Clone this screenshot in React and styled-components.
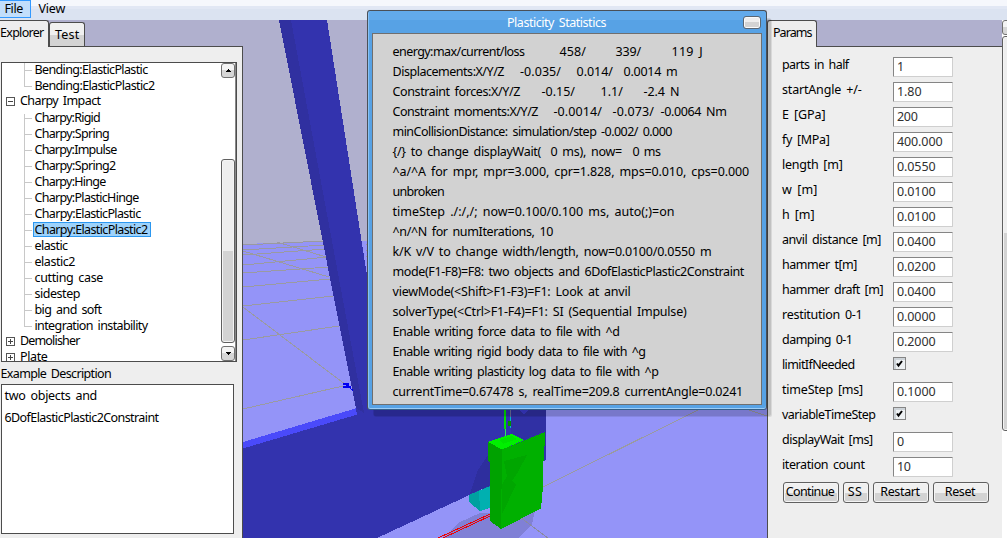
import React, { useLayoutEffect, useRef } from "react";
import styled, { createGlobalStyle, css } from "styled-components";

const GlobalStyle = createGlobalStyle`
  * { box-sizing: border-box; }
  html, body { margin: 0; height: 100%; overflow: hidden; }
  body {
    font-family: "Noto Sans", "Liberation Sans", sans-serif;
    font-size: 12.5px;
    line-height: 16px;
    color: #000;
  }
`;

const Text = styled.span`
  display: inline-block;
  flex: none;
  white-space: pre;
  word-spacing: 2px;
  margin-left: ${(p) => p.$gap || 0}px;
`;

/* Tracks its letters so that the text fills the given width. */
function Fitted({ w, gap, children }) {
  const ref = useRef(null);
  useLayoutEffect(() => {
    const el = ref.current;
    el.style.letterSpacing = "0px";
    const natural = el.getBoundingClientRect().width;
    el.style.letterSpacing = `${(w + 0.5 - natural) / children.length}px`;
  }, [w, children]);
  return (
    <Text ref={ref} $gap={gap}>
      {children}
    </Text>
  );
}

const Frame = styled.div`
  position: relative;
  display: flex;
  flex-direction: column;
  width: 1007px;
  height: 538px;
  overflow: hidden;
  background: #b0b0ce;
`;

const MenuBar = styled.div`
  display: flex;
  flex: none;
  height: 20px;
  background: linear-gradient(#f5f7fc 0 6px, #e1e7f4 6px 9px, #dbe3f1 9px);
`;

const MenuItem = styled.div`
  height: 18px;
  width: ${(p) => (p.$active ? 31 : 44)}px;
  padding-left: ${(p) => (p.$active ? 4.5 : 7.5)}px;
  border: 1px solid ${(p) => (p.$active ? "#3399ff" : "transparent")};
  border-width: 1px 1px 1px 0;
  background: ${(p) => (p.$active ? "#c2defb" : "none")};
`;

const Main = styled.div`
  display: flex;
  flex: 1;
  min-height: 0;
`;

const Dock = styled.div`
  display: flex;
  flex-direction: column;
  flex: none;
  width: ${(p) => p.$w}px;
`;

const TabStrip = styled.div`
  display: flex;
  align-items: flex-end;
  height: 27px;
  flex: none;
  border-bottom: 1px solid #4c4c4c;
`;

const Tab = styled.div`
  width: ${(p) => p.$w}px;
  height: ${(p) => (p.$active ? 27 : 24)}px;
  padding: 4px 0 0 ${(p) => p.$pad}px;
  margin-bottom: ${(p) => (p.$active ? -1 : 0)}px;
  border: 1px solid #4c4c4c;
  border-bottom: 0;
  border-left-width: ${(p) => (p.$flush ? 0 : 1)}px;
  border-radius: ${(p) => (p.$flush ? "0 3px 0 0" : "3px 3px 0 0")};
  background: ${(p) =>
    p.$active ? "#eeeeee" : "linear-gradient(#f0f0f0 0 12px, #d3d3d3 12px)"};
`;

const PanelBody = styled.div`
  display: flex;
  flex-direction: column;
  flex: 1;
  min-height: 0;
  background: #eeeeee;
  ${(p) =>
    p.$explorer
      ? css`padding: 15px 0 0 1px; border-right: 1px solid #4c4c4c;`
      : css`padding: 5px 0 0 14px; border-left: 1px solid #4c4c4c;`}
`;

const TreeBox = styled.div`
  display: flex;
  justify-content: space-between;
  width: 236px;
  height: 300px;
  border: 1px solid #4c4c4c;
  background: #fff;
  overflow: hidden;
`;

const Tree = styled.div`
  margin-top: -2px;
`;

const Leaf = styled.div`
  display: flex;
  align-items: center;
  height: 16px;
  padding-left: 22px;
  background:
    linear-gradient(#c8c8c8, #c8c8c8) 22px ${(p) => (p.$first ? "5px" : "0")} / 1px
      ${(p) => (p.$last ? "9px" : "16px")} no-repeat,
    linear-gradient(#c8c8c8, #c8c8c8) 22px 9px / 8px 1px no-repeat;
`;

const LeafLabel = styled.div`
  margin-left: 9px;
  height: 15px;
  line-height: 13px;
  padding: 0 2px 0 0.5px;
  border: 1px solid ${(p) => (p.$selected ? "#2b97f0" : "transparent")};
  background: ${(p) => (p.$selected ? "#9dd2fb" : "none")};
`;

const Branch = styled.div`
  display: flex;
  align-items: center;
  height: 16px;
  padding-left: 4px;
  gap: 5px;
`;

const BranchLabel = styled.div`
  height: 16px;
  line-height: 16px;
`;

const Expander = styled.span`
  width: 9px;
  height: 9px;
  margin-top: 1px;
  border: 1px solid #555;
  background:
    linear-gradient(#444, #444) center / 5px 1px no-repeat,
    linear-gradient(#444, #444) center / 1px ${(p) => (p.$open ? 0 : 5)}px no-repeat,
    #fff;
`;

const ScrollBar = styled.div`
  display: flex;
  flex-direction: column;
  flex: none;
  width: 15px;
  background: #fff;
  border-right: 1px solid #888;
`;

const ScrollButton = styled.div`
  display: flex;
  align-items: center;
  justify-content: center;
  height: 15px;
  flex: none;
  border: 1px solid #707070;
  border-radius: 3px;
  background: linear-gradient(#f4f4f4 0 45%, #d6d6d6 45%);
`;

const ScrollThumb = styled.div`
  margin-top: ${(p) => p.$top}px;
  height: ${(p) => p.$h}px;
  flex: none;
  border: 1px solid #606060;
  border-radius: 3px;
  box-shadow: inset 0 0 0 1px #f4f4f4;
  background: linear-gradient(#eeeeee 0 50%, #d3d3d3 50%);
`;

const DownSlot = styled.div`
  margin-top: 3px;
`;

const Heading = styled.div`
  margin: 4px 0 2px -0.5px;
  height: 16px;
`;

const Description = styled.div`
  width: 233px;
  height: 150px;
  padding: 0 2.5px;
  border: 1px solid #4c4c4c;
  background: #fff;
  line-height: 22px;
`;

const Viewport = styled.div`
  flex: 1;
  min-width: 0;
  svg { display: block; }
`;

const ParamRow = styled.div`
  display: flex;
  align-items: flex-start;
  height: 25px;
`;

const ParamLabel = styled.div`
  width: 111px;
  padding-top: 5px;
`;

const Field = styled.div`
  width: 60px;
  height: 20px;
  margin-top: 5px;
  padding: 1px 0 0 3px;
  border: 1px solid;
  border-color: #858585 #cfcfcf #cfcfcf #858585;
  border-radius: 1px;
  background: #fff;
  color: #303030;
`;

const CheckBox = styled.div`
  display: flex;
  width: 13px;
  height: 13px;
  margin-top: 5px;
  border: 1px solid #858585;
  background: #eef1f3;
  box-shadow: inset 1px 1px 0 1px #cdd3d8;
`;

const ButtonRow = styled.div`
  display: flex;
  gap: 4px;
  margin: 5px 0 0 1px;
`;

const Button = styled.div`
  display: flex;
  justify-content: center;
  width: ${(p) => p.$w}px;
  height: 21px;
  padding: 1px 2px 0 0;
  border: 1px solid #606060;
  border-radius: 3px;
  box-shadow: inset 0 0 0 1px #f4f4f4;
  background: linear-gradient(#f0f0f0 0 10px, #d3d3d3 10px);
`;

const EdgeScroll = styled.div`
  flex: none;
  width: 20px;
  margin-right: -15px;
  background: #fff;
`;

const Dialog = styled.div`
  position: absolute;
  left: 367px;
  top: 10px;
  width: 400px;
  height: 400px;
  padding: 0 4px 4px;
  border: 1px solid #4a5058;
  border-bottom-color: #355f88;
  border-radius: 3px;
  background: linear-gradient(#62aaeb 0 9px, #57a2e5 9px);
  box-shadow:
    inset 1px 0 0 #86c0f4,
    inset 0 -1px 0 #9bcdf8,
    6px 8px 0 -1px rgba(0, 0, 0, 0.09),
    5px 7px 0 -1px rgba(0, 0, 0, 0.1);
`;

const TitleBar = styled.div`
  display: flex;
  align-items: center;
  height: 22px;
  padding: 1px 0 0 135px;
  color: #fff;
`;

const CloseButton = styled.div`
  width: 18px;
  height: 13px;
  margin: 0 1px 0 auto;
  border: 1px solid #5a6672;
  border-radius: 3px;
  box-shadow: inset 0 0 0 1px #fafafa;
  background: linear-gradient(#eeeeee 0 50%, #d3d3d3 50%);
`;

const DialogBody = styled.div`
  height: 372px;
  padding: 8px 0 0 19.5px;
  border: 1px solid #6f6f6f;
  background: #d2d2d2;
`;

const StatLine = styled.div`
  display: flex;
  align-items: center;
  height: 20px;
`;

const leaves = [
  ["Charpy:Rigid", 65],
  ["Charpy:Spring", 74],
  ["Charpy:Impulse", 81.5],
  ["Charpy:Spring2", 80.5],
  ["Charpy:Hinge", 70.5],
  ["Charpy:PlasticHinge", 103.5],
  ["Charpy:ElasticPlastic", 105.5],
  ["Charpy:ElasticPlastic2", 112.5],
  ["elastic", 32.5],
  ["elastic2", 40],
  ["cutting case", 68],
  ["sidestep", 45],
  ["big and soft", 66.5],
  ["integration instability", 112.5],
];

/* Each line is a list of [text, start, end]. */
const stats = [
  [["energy:max/current/loss", 393, 524.5], ["458/", 560, 586], ["339/", 616, 641], ["119 J", 672, 703]],
  [["Displacements:X/Y/Z", 393, 504], ["-0.035/", 520.5, 561], ["0.014/", 577, 613], ["0.0014 m", 624, 677.5]],
  [["Constraint forces:X/Y/Z", 393, 520], ["-0.15/", 542, 575], ["1.1/", 601, 623], ["-2.4 N", 644, 679.5]],
  [["Constraint moments:X/Y/Z", 393, 538], ["-0.0014/", 554, 602], ["-0.073/", 613, 654], ["-0.0064 Nm", 661, 726.5]],
  [["minCollisionDistance: simulation/step -0.002/ 0.000", 393, 672]],
  [["{/} to change displayWait(", 393, 541], ["0 ms), now=", 551, 622], ["0 ms", 633, 660.5]],
  [["^a/^A for mpr, mpr=3.000, cpr=1.828, mps=0.010, cps=0.000", 393, 749]],
  [["unbroken", 393, 444]],
  [["timeStep ./:/,/; now=0.100/0.100 ms, auto(;)=on", 393, 674.5]],
  [["^n/^N for numIterations, 10", 393, 553]],
  [["k/K v/V to change width/length, now=0.0100/0.0550 m", 393, 711.5]],
  [["mode(F1-F8)=F8: two objects and 6DofElasticPlastic2Constraint", 393, 744]],
  [["viewMode(<Shift>F1-F3)=F1: Look at anvil", 393, 630.5]],
  [["solverType(<Ctrl>F1-F4)=F1: SI (Sequential Impulse)", 393, 686.5]],
  [["Enable writing force data to file with ^d", 393, 619.5]],
  [["Enable writing rigid body data to file with ^g", 393, 645.5]],
  [["Enable writing plasticity log data to file with ^p", 393, 658.5]],
  [["currentTime=0.67478 s, realTime=209.8 currentAngle=0.0241", 393, 743]],
];

const params = [
  ["parts in half", 66, "1", 6],
  ["startAngle +/-", 79, "1.80", 24],
  ["E [GPa]", 43, "200", 20],
  ["fy [MPa]", 47, "400.000", 45],
  ["length [m]", 60, "0.0550", 38],
  ["w [m]", 35, "0.0100", 38],
  ["h [m]", 32, "0.0100", 38],
  ["anvil distance [m]", 98.5, "0.0400", 38],
  ["hammer t[m]", 74.5, "0.0200", 38],
  ["hammer draft [m]", 100.5, "0.0400", 38],
  ["restitution 0-1", 80, "0.0000", 38],
  ["damping 0-1", 70, "0.2000", 38],
  ["limitIfNeeded", 72],
  ["timeStep [ms]", 80.5, "0.1000", 38],
  ["variableTimeStep", 93],
  ["displayWait [ms]", 90, "0", 6],
  ["iteration count", 82, "10", 13],
];

const gridLines = [
  [243, 245, 323, 241], [243, 250, 325, 245], [243, 255, 326, 249], [243, 265, 328, 257],
  [243, 273, 329, 267], [243, 287, 330, 279], [243, 306, 333, 296], [243, 340, 339, 326],
  [243, 409, 343, 386], [243, 307, 346, 385], [243, 251, 329, 277], [277, 242, 326, 257],
  [366, 244, 368, 244], [366, 250, 368, 250], [366, 256, 368, 256],
  [541, 488, 700, 409], [749, 410, 767, 416],
];

function Scene() {
  return (
    <svg width="524" height="518" viewBox="243 20 524 518" shapeRendering="crispEdges">
      <rect x="243" y="20" width="524" height="518" fill="#b0b0ce" />
      <path d="M243 244L330 241H767V538H243Z" fill="#9494f8" />
      {gridLines.map(([x1, y1, x2, y2], i) => (
        <line key={i} x1={x1} y1={y1} x2={x2} y2={y2} stroke="#9a9aa0" />
      ))}
      <path d="M243 442L357 408L364 413L243 448.500Z" fill="#4a4afa" />
      <path d="M279 20H327L368 282V414H357Z" fill="#3333ae" />
      <path d="M279 20H291L337 268L364 413L356 408L328 268Z" fill="#3030a0" />
      <path d="M243 448.500L364 412.500V405H546V460L490 485.500L377 538H243Z" fill="#3333ae" />
      <path d="M511 409H546V433L524 440L511 435Z" fill="#3030a4" />
      <path d="M518 409H530L524 414Z" fill="#3c3cd0" />
      <path d="M470 494L478 470L490 452V486Z" fill="#2e2e9e" />
      <path d="M445 538L458 523L480 513H500L535 511L532 524L519 538Z" fill="#8080d6" />
      <line x1="520" y1="517" x2="548" y2="538" stroke="#8a8aa0" />
      <path d="M469 495L490 486V508L480 511L469 502Z" fill="#00a0a0" />
      <path d="M479 491L491 486V507L480 511.500Z" fill="#00b0b0" />
      <path d="M438 538L490 514M443 538L490 516" stroke="#f00000" fill="none" />
      <path d="M488 442L502 449.500L545 432L544 461H543V487L541 508.500L501 529L490 521V462L488 461Z" fill="#00b000" />
      <path d="M488 442L502 449.500L501 529L490 521V462L488 461Z" fill="#00a200" />
      <path d="M504 461L527 455L518 472L512 481L516 485L502 514V485L507 476Z" fill="#00a600" />
      <path d="M488 442L512 434L524 440L502 449.500Z" fill="#00f000" />
      <path d="M500 440L512 436L517 439L503 444Z" fill="#00e400" />
      <path d="M505 409V429" stroke="#00e000" strokeWidth="2" />
      <path d="M505.500 429V436" stroke="#30e060" />
      <path d="M510.500 409V418" stroke="#6e6e9c" />
      <path d="M510.500 417V428" stroke="#00b8c8" />
      <path d="M508 421H511V426H508Z" fill="#009000" />
      <path d="M343 383H349V386H351V389H353V391H352L349 388H343V386H346V385H343Z" fill="#0000f0" />
    </svg>
  );
}

function Arrow({ up }) {
  return (
    <svg width="5" height="3" viewBox="0 0 5 3" shapeRendering="crispEdges">
      <path d={up ? "M2 0H3V1H4V2H5V3H0V2H1V1H2Z" : "M0 0H5V1H4V2H3V3H2V2H1V1H0Z"} />
    </svg>
  );
}

function Check() {
  return (
    <svg width="11" height="11" viewBox="0 0 11 11">
      <path d="M3 5.500L4.500 7.500L8 3" fill="none" stroke="#000" strokeWidth="2" />
    </svg>
  );
}

export default function App() {
  return (
    <Frame>
      <GlobalStyle />
      <MenuBar>
        <MenuItem $active>
          <Fitted w={18}>File</Fitted>
        </MenuItem>
        <MenuItem>
          <Fitted w={26}>View</Fitted>
        </MenuItem>
      </MenuBar>
      <Main>
        <Dock $w={243}>
          <TabStrip>
            <Tab $active $flush $w={49} $pad={0}>
              <Fitted w={43}>Explorer</Fitted>
            </Tab>
            <Tab $w={36} $pad={5}>
              <Fitted w={24}>Test</Fitted>
            </Tab>
          </TabStrip>
          <PanelBody $explorer>
            <TreeBox>
              <Tree>
                <Leaf>
                  <LeafLabel><Fitted w={112.5}>Bending:ElasticPlastic</Fitted></LeafLabel>
                </Leaf>
                <Leaf $last>
                  <LeafLabel><Fitted w={119.5}>Bending:ElasticPlastic2</Fitted></LeafLabel>
                </Leaf>
                <Branch>
                  <Expander $open />
                  <BranchLabel><Fitted w={80}>Charpy Impact</Fitted></BranchLabel>
                </Branch>
                {leaves.map(([text, w], i) => (
                  <Leaf key={text} $first={i === 0} $last={i === leaves.length - 1}>
                    <LeafLabel $selected={text === "Charpy:ElasticPlastic2"}>
                      <Fitted w={w}>{text}</Fitted>
                    </LeafLabel>
                  </Leaf>
                ))}
                <Branch>
                  <Expander />
                  <BranchLabel><Fitted w={59}>Demolisher</Fitted></BranchLabel>
                </Branch>
                <Branch>
                  <Expander />
                  <BranchLabel><Fitted w={27}>Plate</Fitted></BranchLabel>
                </Branch>
              </Tree>
              <ScrollBar>
                <ScrollButton><Arrow up /></ScrollButton>
                <ScrollThumb $top={81} $h={184} />
                <DownSlot>
                  <ScrollButton><Arrow /></ScrollButton>
                </DownSlot>
              </ScrollBar>
            </TreeBox>
            <Heading>
              <Fitted w={110}>Example Description</Fitted>
            </Heading>
            <Description>
              <div><Fitted w={92}>two objects and</Fitted></div>
              <div><Fitted w={153.5}>6DofElasticPlastic2Constraint</Fitted></div>
            </Description>
          </PanelBody>
        </Dock>
        <Viewport>
          <Scene />
        </Viewport>
        <Dock $w={235}>
          <TabStrip>
            <Tab $active $w={50} $pad={5}>
              <Fitted w={38}>Params</Fitted>
            </Tab>
          </TabStrip>
          <PanelBody>
            {params.map(([label, w, value, vw]) => (
              <ParamRow key={label}>
                <ParamLabel><Fitted w={w}>{label}</Fitted></ParamLabel>
                {value ? (
                  <Field><Fitted w={vw}>{value}</Fitted></Field>
                ) : (
                  <CheckBox><Check /></CheckBox>
                )}
              </ParamRow>
            ))}
            <ButtonRow>
              <Button $w={56}><Fitted w={48}>Continue</Fitted></Button>
              <Button $w={26}><Fitted w={14}>SS</Fitted></Button>
              <Button $w={56}><Fitted w={39}>Restart</Fitted></Button>
              <Button $w={56}><Fitted w={30}>Reset</Fitted></Button>
            </ButtonRow>
          </PanelBody>
        </Dock>
        <EdgeScroll>
          <ScrollButton />
          <ScrollThumb $top={1} $h={395} />
        </EdgeScroll>
      </Main>
      <Dialog>
        <TitleBar>
          <Fitted w={98.5}>Plasticity Statistics</Fitted>
          <CloseButton />
        </TitleBar>
        <DialogBody>
          {stats.map((line, i) => (
            <StatLine key={i}>
              {line.map(([text, x1, x2], j) => (
                <Fitted key={j} w={x2 - x1} gap={j ? x1 - line[j - 1][2] - 0.5 : 0}>
                  {text}
                </Fitted>
              ))}
            </StatLine>
          ))}
        </DialogBody>
      </Dialog>
    </Frame>
  );
}
